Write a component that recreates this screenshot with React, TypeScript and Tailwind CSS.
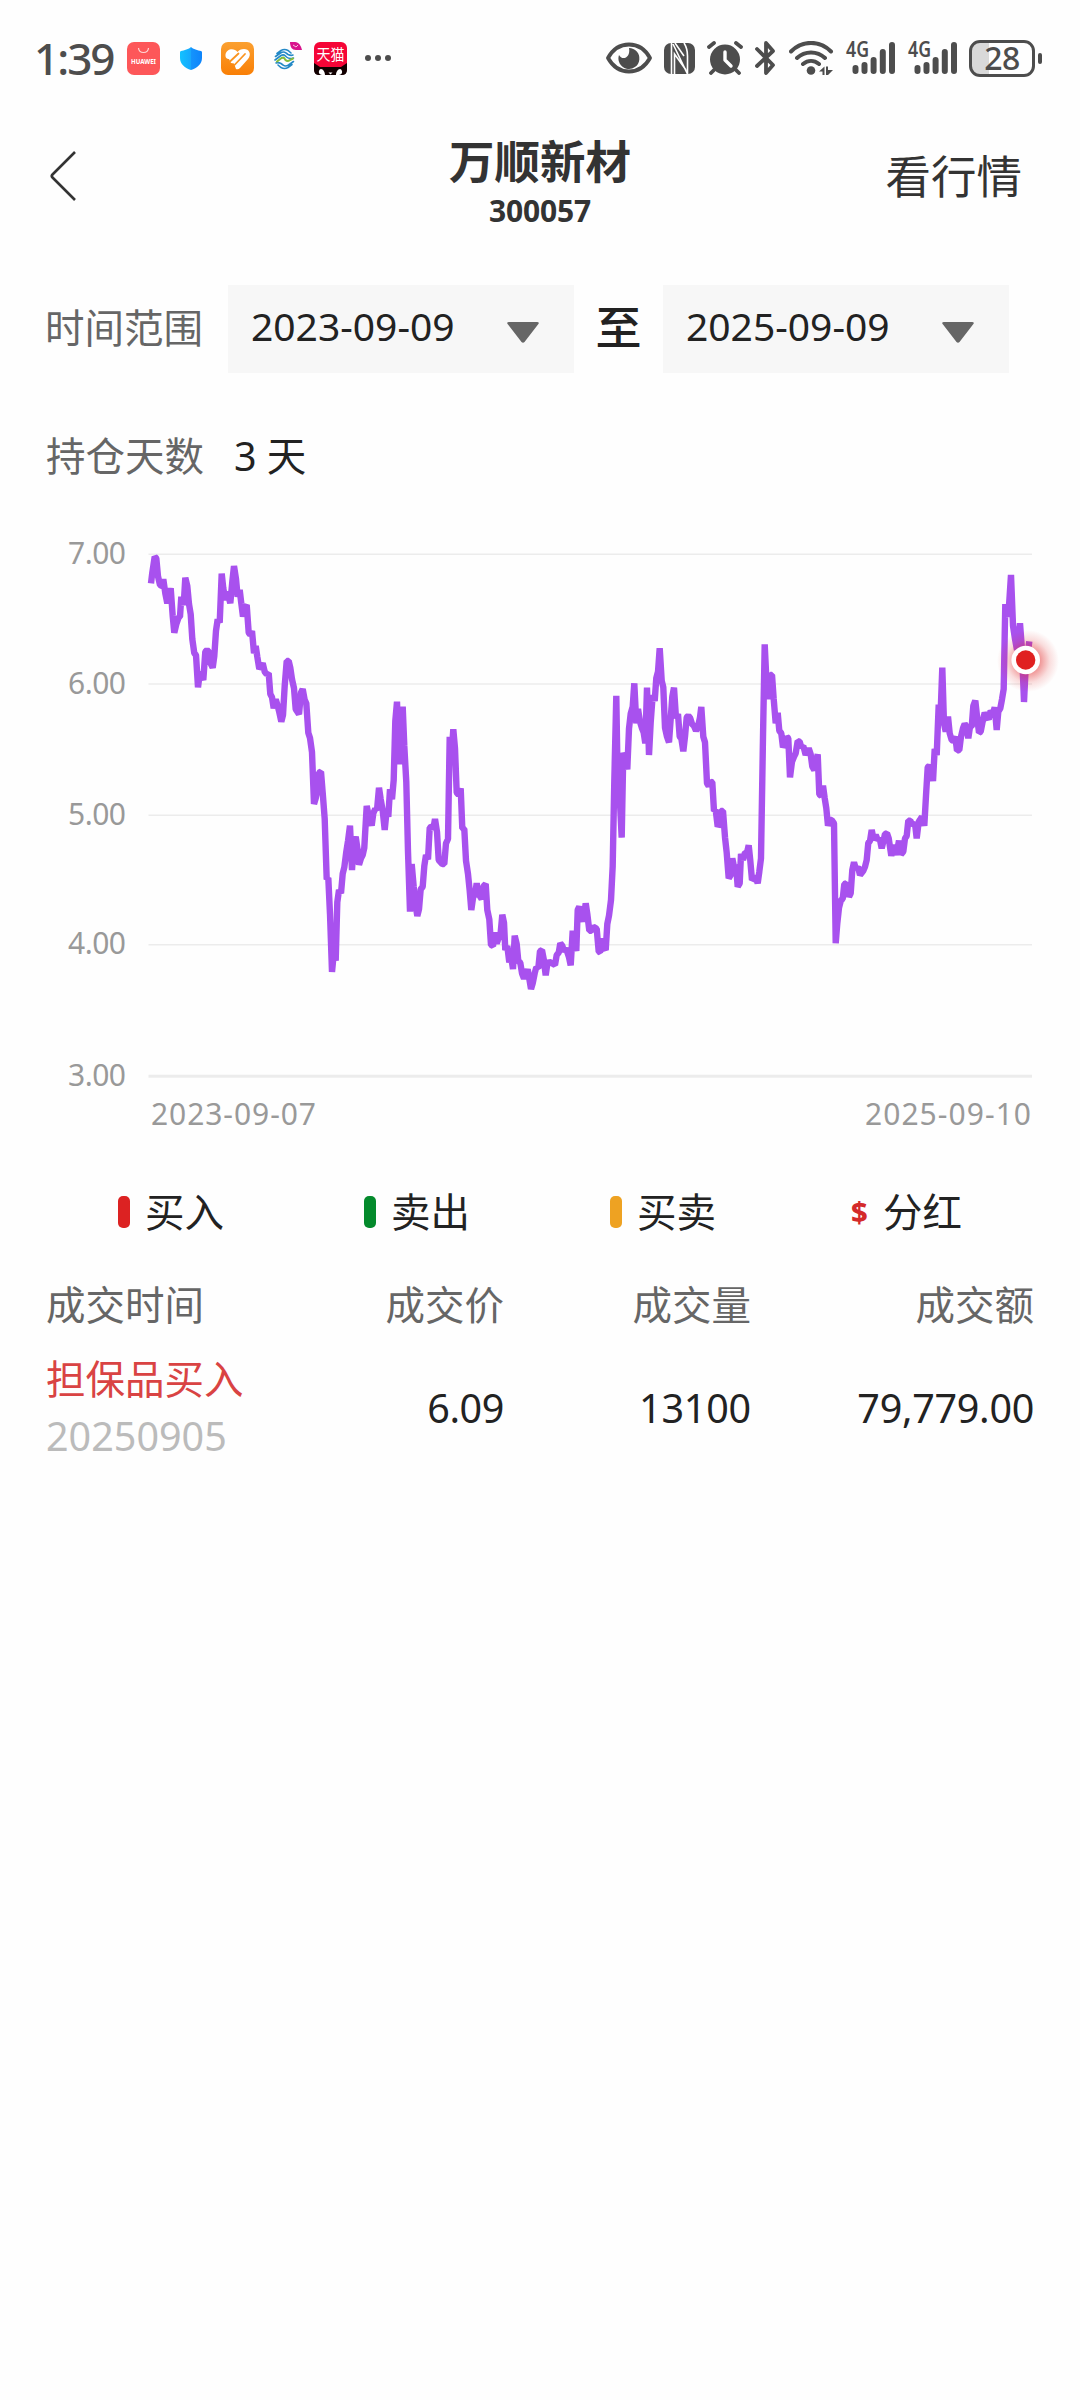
import type { ReactNode } from "react";

// price line, stored in blocks: each block has an origin and points in 1/3 px steps
const priceBlocks = [
    {
        x: 140,
        y: 540,
        points:
            "33,130 37,98 44,50 49,55 54,109 60,135 67,138 70,118 76,160 82,190 92,145 98,228 103,278 109,253 116,232 120,230 124,170 131,195 136,113 142,138 147,192 152,223 157,297 163,340 168,345 174,442 180,395 190,420 196,335 201,330 206,335 208,362 218,383 223,348 228,272 233,238 239,248 245,101 250,145 256,180 262,155 271,190 277,125 282,78 288,117 293,170 299,150 304,190 309,230 315,202 320,195 326,278 331,284 336,273 342,340 347,318 352,350 358,387 368,370 374,395 380,403 386,400 391,462 396,472 401,505 407,478 413,498 418,517 424,545 429,525 434,437 440,363 446,363 451,383 456,418 462,445 467,508 477,523 483,458 488,447 494,480 499,490 505,578 510,594 516,637 522,792 527,775 532,752 537,698 543,695 548,758 554,837 560,1018 565,1014 570,1122 576,1296 582,1233 587,1262 592,1087 597,1050 603,1060 608,1001 613,982 619,935 624,903 630,857 636,990 641,910 647,890 652,923 657,974 663,955 668,945 673,923 680,798 685,822 695,857 700,820 706,806 711,810",
    },
    {
        x: 360,
        y: 640,
        points:
            "57,443 62,478 68,512 74,570 80,510 85,530 90,448 96,478 101,420 106,243 111,185 117,373 122,263 128,200 133,318 139,427 144,635 150,815 155,672 161,740 166,788 172,828 177,808 182,748 188,740 193,678 198,645 204,658 209,563 215,560 220,568 225,537 231,576 236,660 247,672 253,672 258,610 264,597 269,290 275,342 280,268 285,325 290,458 296,465 302,445 307,565 313,567 318,662 324,702 329,752 334,810 340,768 345,765 350,730 356,762 365,777 371,738 377,732 382,810 388,838 393,915 399,918 404,877 410,910 415,897 421,890 427,824 432,848 436,930 442,918 448,967 453,948 459,987 464,887 470,912 475,963 481,968 486,1000 492,1016 503,988 513,1047 518,1030 524,1000 529,982 535,985 540,933 546,930 551,957 557,1006 562,972 568,965 585,975 590,945 596,938 601,910 607,917 612,935 618,925 627,952 632,976 638,872 643,905 649,933 653,810 658,800 670,845 677,790 682,822 688,872 694,872 700,860 710,866 716,935",
    },
    {
        x: 560,
        y: 620,
        points:
            "120,997 125,955 130,980 137,990 142,912 147,887 153,840 158,738 163,484 169,227 174,548 180,548 185,653 190,398 196,416 202,448 207,326 212,281 218,260 223,190 229,310 234,267 240,305 246,325 251,338 256,370 261,203 267,405 272,307 278,225 284,243 289,174 294,155 299,85 305,182 310,202 315,323 321,350 327,367 332,296 337,230 342,203 348,295 354,282 359,350 364,355 370,394 375,350 380,292 385,287 391,295 396,312 402,318 408,332 414,320 420,292 424,261 430,350 435,367 441,490 446,498 452,485 457,487 462,573 467,570 473,620 479,610 482,573 489,573 495,652 500,698 506,775 512,765 517,715 523,745 528,735 533,800 539,790 543,702 549,720 555,698 561,698 566,676 571,722 576,780 582,775 587,770 593,790 598,755 603,715 609,350 614,73 620,200 625,237 631,165 636,165 641,237 647,310 653,278 658,332 664,340 669,382 675,370 680,350 685,355",
    },
    {
        x: 780,
        y: 540,
        points:
            "30,712 36,665 42,650 47,640 53,603 59,605 64,622 70,618 77,645 86,625 92,643 97,680 103,690 113,643 118,763 124,768 129,737 134,775 139,805 144,857 150,840 155,840 162,850 167,1210 172,1150 177,1103 183,1080 188,1077 193,1032 199,1030 207,1070 212,1060 217,990 222,967 228,988 234,980 240,1005 250,992 255,980 260,960 265,908 270,903 275,870 281,900 287,885 293,900 299,895 305,925 310,905 315,882 321,880 326,895 334,947 343,915 349,945 357,902 363,943 370,935 375,895 380,888 385,842 391,842 397,855 405,850 410,895 416,845 421,838 426,830 433,857 438,767 443,682 448,677 454,690 459,723 464,627 470,645 476,494 481,545 487,383 492,550 497,575 504,530 509,580 515,600 520,602 526,590 531,632 538,630 543,590 549,565 554,552 560,560 565,595 570,560 575,560 580,498 586,482 591,528 597,578 602,575 607,550 614,518 620,530 626,538 632,512 638,522 644,502 650,570 655,515 661,505 666,478 671,447 676,192 685,230 693,105 699,257 705,297 711,330 720,250 726,330 732,486 738,360 742,350 748,304",
    },
];

const pricePoints = priceBlocks
    .flatMap((block) =>
        block.points.split(" ").map((pair) => {
            const [x, y] = pair.split(",").map(Number);
            return `${(block.x + x / 3).toFixed(1)},${(block.y + y / 3).toFixed(1)}`;
        })
    )
    .join(" ");

const gridLines = [
    { label: "7.00", y: 554.3, width: 1.5 },
    { label: "6.00", y: 684, width: 1.5 },
    { label: "5.00", y: 815.3, width: 1.5 },
    { label: "4.00", y: 944.8, width: 1.5 },
    { label: "3.00", y: 1076.3, width: 3 },
];

function SignalIcon() {
    return (
        <svg className="-mt-[10px] h-[46px] w-[50px] shrink-0" viewBox="0 -10 50 46">
            <text x="1" y="17" fontSize="22" fontWeight="600" textLength="23" lengthAdjust="spacingAndGlyphs" fill="#4d4d4d">4G</text>
            <path d="M10.500 28v3M19.500 25v6M28.600 20v11M37.800 12v19M47 5v26" stroke="#4d4d4d" strokeWidth="6" strokeLinecap="round" />
        </svg>
    );
}

function StatusBar() {
    return (
        <header className="flex h-[116px] items-center text-[#4d4d4d]">
            <span className="mb-[1px] ml-[34px] w-[84px] text-[44px] leading-[60px] font-medium tracking-[-2px]">1:39</span>
            {/* notification icons */}
            <svg className="ml-[9px] size-[33px]" viewBox="0 0 33 33">
                <rect width="33" height="33" rx="7" fill="#fd5759" />
                <path d="M11.500 6c.5 6 9.500 6 10 0" fill="none" stroke="#ffd7d5" strokeWidth="1.200" />
                <text x="4" y="21.500" fontSize="7" fontWeight="700" textLength="25" lengthAdjust="spacingAndGlyphs" fill="#fff">HUAWEI</text>
            </svg>
            <svg className="ml-[20px] h-[23px] w-[22px]" viewBox="0 0 22 23">
                <defs>
                    <linearGradient id="shield" x1="0" x2="1">
                        <stop offset="0" stopColor="#13c2ff" />
                        <stop offset="0.500" stopColor="#16a8fd" />
                        <stop offset="0.500" stopColor="#1594fc" />
                        <stop offset="1" stopColor="#0d84fb" />
                    </linearGradient>
                </defs>
                <path d="M11 0C13 2 18 3.500 21 4q1 .3 1 1.500V11c0 6-5 10-11 12C5 21 0 17 0 11V5.500Q0 4.300 1 4C4 3.500 9 2 11 0z" fill="url(#shield)" />
            </svg>
            <svg className="ml-[19px] size-[33px]" viewBox="0 0 33 33">
                <defs>
                    <linearGradient id="health" x1="0" y1="0" x2="0" y2="1">
                        <stop offset="0" stopColor="#fba030" />
                        <stop offset="1" stopColor="#f97f06" />
                    </linearGradient>
                </defs>
                <rect width="33" height="33" rx="7" fill="url(#health)" />
                <path d="M16.500 10C13 5 5 7 4.500 12.500 4.200 16 6 17 8 17l2 4 3 .5 2 5.500q2 1 4-1l8-9c4-5 1-10-4-10-3 0-5 1-6.500 3z" fill="#fff" />
                <path d="M17.500 11.500L9 19.500M24 12L13.500 23" stroke="#fa9420" strokeWidth="1.800" strokeLinecap="round" />
            </svg>
            <svg className="ml-[20px] h-[33px] w-[28px]" viewBox="0 0 28 33">
                <g fill="none" strokeWidth="1.600" strokeLinecap="round">
                    <path d="M3 11.500l4-3q3.500-2 7 0l3 2.500M1.500 14.500l5-3.500q3-2 5.500 0l2 1.500q3 1.500 5 .5M1 18l6-4.500q2.500-1.500 4.500.5l1 1q3 2.500 7 1" stroke="#2489c7" />
                    <path d="M18 22.500l-4 3q-3.500 2-7 0l-3-2.500M19.500 19.500l-5 3.500q-3 2-5.500 0l-2-1.500q-3-1.500-5-.5" stroke="#2489c7" />
                    <path d="M3 19.500l4.500-3.500q2-1 3 .5l1 1.500q2 2 4.500 0l3-1.500" stroke="#83bd3c" strokeWidth="2" />
                </g>
                <path d="M16 0h5c4 0 6 4 7 8h-6c-4 0-6-3-6-8z" fill="#d8148c" />
                <path d="M19 3l3 2 2-2" fill="none" stroke="#f9bfdf" />
            </svg>
            <svg className="ml-[12px] size-[33px]" viewBox="0 0 33 33">
                <rect width="33" height="33" rx="6" fill="#f50537" />
                <text x="2.500" y="18" fontSize="15" textLength="28" lengthAdjust="spacingAndGlyphs" fill="#fff">天猫</text>
                <path d="M0 21l6 4h21l6-4v7q0 5-5 5H5q-5 0-5-5z" fill="#100" />
                <path d="M8 33c-5-1-3-6-1-6s4 3 4 6zM25 33c5-1 3-6 1-6s-4 3-4 6z" fill="#fff" />
                <path d="M14.500 30.500h4l-2 2z" fill="#fff" />
            </svg>
            <div className="ml-[18px] flex gap-[4px]">
                <i className="size-[6px] rounded-full bg-[#4d4d4d]" />
                <i className="size-[6px] rounded-full bg-[#4d4d4d]" />
                <i className="size-[6px] rounded-full bg-[#4d4d4d]" />
            </div>

            {/* system icons */}
            <div className="mr-[38px] ml-auto flex items-center">
                <svg className="h-[32px] w-[46px]" viewBox="0 0 46 32">
                    <path d="M2 16C12-2 34-2 44 16 34 34 12 34 2 16z" fill="none" stroke="#4d4d4d" strokeWidth="3.800" strokeLinejoin="round" />
                    <path d="M23 6a10.500 10.500 0 1 1-10 7c3 6 12 3 10-7z" fill="#4d4d4d" />
                </svg>
                <svg className="ml-[12px] size-[31px]" viewBox="0 0 31 31">
                    <rect width="31" height="31" rx="7" fill="#4d4d4d" />
                    <path d="M7.500 0v31M9 1l14.500 30M10.500 31V11l11.500 16M23.500 31V13C23.500 7 22 3 20 0M11 0l9 13" fill="none" stroke="#fff" strokeWidth="1.600" />
                </svg>
                <svg className="ml-[12px] h-[34px] w-[36px]" viewBox="0 0 36 34">
                    <circle cx="18" cy="18.500" r="15" fill="#4d4d4d" />
                    <path d="M2 6l5-4M34 6l-5-4M7 29l-3 3M29 29l3 3" stroke="#4d4d4d" strokeWidth="3.800" strokeLinecap="round" />
                    <path d="M18 11v8l6 6" fill="none" stroke="#fff" strokeWidth="3.400" strokeLinecap="round" strokeLinejoin="round" />
                </svg>
                <svg className="ml-[12px] h-[36px] w-[22px]" viewBox="0 0 22 36">
                    <path d="M2 9l16 16-7 8V3l7 8L2 26" fill="none" stroke="#4d4d4d" strokeWidth="3.800" strokeLinecap="round" strokeLinejoin="round" />
                </svg>
                <svg className="ml-[12px] h-[34px] w-[45px]" viewBox="0 0 45 34">
                    <path d="M2 10.500C13-1 31-1 42 10.500M8 17c8-7.500 20-7.500 28 0M14 23c5-4 11-4 16 0" fill="none" stroke="#4d4d4d" strokeWidth="4" strokeLinecap="round" />
                    <circle cx="22" cy="29.500" r="4.300" fill="#4d4d4d" />
                    <path d="M30 30.500l5.500-5V34h-2v-3.500zM37 25.500v8.500h2l5-5h-5v-3.500z" fill="#4d4d4d" />
                </svg>
                <div className="ml-[11px] flex gap-[12px]">
                    <SignalIcon />
                    <SignalIcon />
                </div>
                <div className="ml-[12px] flex h-[37px] w-[66px] items-center justify-center rounded-[11px] border-3 border-[#4d4d4d] bg-[linear-gradient(90deg,#d9d9d9_29%,transparent_29%)] text-[32px] leading-none font-medium tracking-[-0.5px]">
                    28
                </div>
                <i className="ml-[3px] h-[11px] w-[4px] rounded-full bg-[#4d4d4d]" />
            </div>
        </header>
    );
}

function NavBar() {
    return (
        <nav className="grid h-[120px] grid-cols-[300px_1fr_300px] items-center text-[#333]">
            <svg className="ml-[49px] h-[54px] w-[30px]" viewBox="0 0 30 54">
                <path d="M26 3L3.500 25.500q-1.500 1.500 0 3L26 51" fill="none" stroke="#333" strokeWidth="2.600" />
            </svg>
            <div className="pt-[12px] text-center font-bold">
                <h1 className="text-[45.500px] leading-[56px] font-bold">万顺新材</h1>
                <p className="mt-[1px] text-[30px] leading-[42px] tracking-[-0.2px]">300057</p>
            </div>
            <span className="pr-[58px] text-right text-[45.500px]">看行情</span>
        </nav>
    );
}

function DateSelect({ value }: { value: string }) {
    return (
        <div className="flex h-[88px] w-[346px] items-center justify-between bg-[#f7f7f7] pr-[35px] pl-[23px] text-[#222]">
            <span className="mb-[7px] text-[39px]">{value}</span>
            <svg className="mt-[7px] h-[21px] w-[32px]" viewBox="0 0 32 21">
                <path d="M2 0h28q3 0 1 2.500L17.500 20q-1.500 1.500-3 0L1 2.500Q-1 0 2 0z" fill="#666" />
            </svg>
        </div>
    );
}

function PriceChart() {
    return (
        <svg className="block h-[640px] w-[1080px]" viewBox="0 510 1080 640">
            <defs>
                <radialGradient id="glow">
                    <stop offset="0.400" stopColor="#e02020" stopOpacity="0.450" />
                    <stop offset="0.700" stopColor="#e02020" stopOpacity="0.150" />
                    <stop offset="1" stopColor="#e02020" stopOpacity="0" />
                </radialGradient>
            </defs>
            {gridLines.map((line) => (
                <g key={line.label}>
                    <path d={`M148.500 ${line.y}H1032`} stroke="#ececec" strokeWidth={line.width} />
                    <text x="126" y={line.y + 9.5} textAnchor="end" fontSize="30" textLength="58" fill="#999">{line.label}</text>
                </g>
            ))}
            <text x="151" y="1125" fontSize="30" textLength="165" fill="#999">2023-09-07</text>
            <text x="865" y="1125" fontSize="30" textLength="166" fill="#999">2025-09-10</text>
            <polyline points={pricePoints} fill="none" stroke="#a851ee" strokeWidth="6.400" strokeLinejoin="bevel" />
            <circle cx="1028" cy="661" r="31" fill="url(#glow)" />
            <circle cx="1025.700" cy="660" r="14.300" fill="#fff" />
            <circle cx="1025.700" cy="660" r="9.700" fill="#e02020" />
        </svg>
    );
}

function LegendItem({ icon, label }: { icon: ReactNode; label: string }) {
    return (
        <div className="flex w-[246px] shrink-0 items-center">
            {icon}
            <span className="ml-[15px]">{label}</span>
        </div>
    );
}

function Legend() {
    return (
        <div className="flex h-[64px] items-center pl-[118px] text-[39.500px] leading-[60px] text-[#222]">
            <LegendItem icon={<i className="h-[32px] w-[12px] rounded-[5px] bg-[#dc2222]" />} label="买入" />
            <LegendItem icon={<i className="h-[32px] w-[12px] rounded-[5px] bg-[#048a2c]" />} label="卖出" />
            <LegendItem icon={<i className="h-[32px] w-[12px] rounded-[5px] bg-[#eea222]" />} label="买卖" />
            <LegendItem icon={<b className="-ml-[5px] w-[17px] text-[29px] leading-[32px] font-extrabold text-[#d42a2a]">$</b>} label="分红" />
        </div>
    );
}

export default function App() {
    return (
        <main className="h-[2400px] w-[1080px] overflow-hidden bg-[#fefefe] font-['Noto_Sans','Noto_Sans_CJK_SC',sans-serif] leading-[60px]">
            <StatusBar />
            <NavBar />

            <section className="mt-[49px] flex h-[88px] items-center pl-[45px] text-[#666]">
                <span className="mb-[2px] w-[183px] text-[39.500px]">时间范围</span>
                <DateSelect value="2023-09-09" />
                <span className="mb-[6px] w-[89px] text-center text-[46px] font-medium text-[#222]">至</span>
                <DateSelect value="2025-09-09" />
            </section>

            <section className="mt-[53px] flex h-[60px] items-center pl-[46px] text-[39.500px] text-[#666]">
                <span>持仓天数</span>
                <span className="ml-[30px] text-[#222]">3 天</span>
            </section>

            <div className="mt-[24px]">
                <PriceChart />
            </div>

            <div className="mt-[30px]">
                <Legend />
            </div>

            <section className="mt-[31px] pl-[46px] text-[39.500px]">
                <div className="grid grid-cols-[211px_247px_247px_283px] text-right text-[#666]">
                    <span className="text-left">成交时间</span>
                    <span>成交价</span>
                    <span>成交量</span>
                    <span>成交额</span>
                </div>
                <div className="mt-[16px] grid grid-cols-[211px_247px_247px_283px] items-center text-right text-[#222]">
                    <div className="text-left leading-[57px] whitespace-nowrap">
                        <p className="text-[#d94343]">担保品买入</p>
                        <p className="text-[#bbb]">20250905</p>
                    </div>
                    <span className="tracking-[-0.4px]">6.09</span>
                    <span className="tracking-[-0.2px]">13100</span>
                    <span className="tracking-[-0.3px]">79,779.00</span>
                </div>
            </section>
        </main>
    );
}
